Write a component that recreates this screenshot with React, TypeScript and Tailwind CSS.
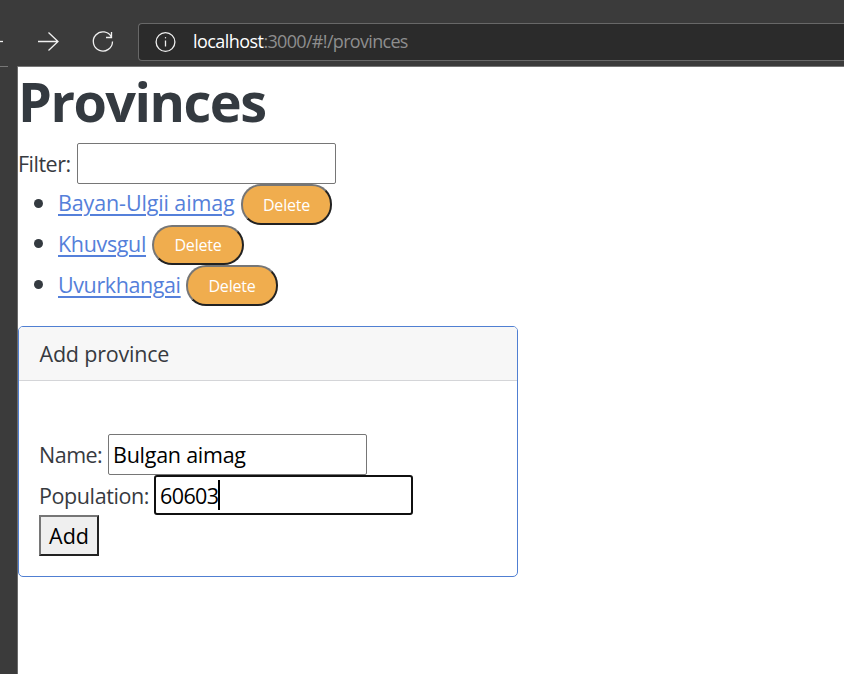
import React from "react";

const provinces = [
  { name: "Bayan-Ulgii aimag", link: "w-[177px] tracking-[-0.13px]", button: "ml-[6px] w-[91px]" },
  { name: "Khuvsgul", link: "w-[88px] tracking-[-0.35px]", button: "ml-[6px] w-[92px]" },
  { name: "Uvurkhangai", link: "w-[122px] tracking-[-0.4px]", button: "ml-[6px] w-[92px]" },
];

function Toolbar() {
  return (
    <header className="flex h-[66px] shrink-0 items-start pt-[23px]">
      <svg className="h-[38px] w-[138px] shrink-0" viewBox="0 23 138 38" fill="none" stroke="#f0f0f0" strokeWidth="1.3">
        <path d="M0 41.5H3" />
        <path d="M38 41.5H58M48.5 32.5L58 41.5L48.5 50.5" />
        <path d="M111.5 37.2A9.6 9.6 0 1 0 112.5 41.5M111.5 32V37.5H106" />
      </svg>
      <div className="flex h-[38px] flex-1 items-center rounded-l-[4px] border border-r-0 border-[#686868] bg-[#2b2b2b] pl-4">
        <svg className="size-[22px] shrink-0" viewBox="0 0 22 22" fill="none" stroke="#f0f0f0" strokeWidth="1.3">
          <circle cx="10.5" cy="11" r="9.4" />
          <path d="M10.5 9.5V15.5" />
          <circle cx="10.5" cy="6.8" r="0.7" fill="#f0f0f0" stroke="none" />
        </svg>
        <div className="mb-[2px] ml-[16px] whitespace-nowrap text-[18px] leading-6 tracking-[-0.68px] text-[#8e8e8e]">
          <span className="tracking-[-0.55px] text-white">localhost</span>:3000/#!/provinces
        </div>
      </div>
    </header>
  );
}

export default function App() {
  return (
    <div className="flex h-[674px] w-[844px] flex-col overflow-hidden bg-[#3b3b3b] font-['Open_Sans','Noto_Sans',sans-serif] text-[21.5px] leading-[30px] text-[#373a3f]">
      <Toolbar />
      <div className="flex flex-1">
        <div className="w-[18px] shrink-0 border-r border-[#6b6b6b]">
          <div className="h-px w-2 bg-[#777]" />
        </div>
        <main className="flex-1 border-t border-[#777] bg-white">
          <h1 className="h-[76px] text-[54px] font-bold leading-[69px] tracking-[-1.5px] text-[#343a40]">Provinces</h1>
          <div className="flex h-[41px] items-center whitespace-nowrap">
            <label className="w-[59px] tracking-[-0.5px]">Filter:</label>
            <input className="h-[41px] w-[259px] rounded-[2px] border border-[#767676] px-1 outline-none" />
          </div>
          <ul>
            {provinces.map((p) => (
              <li key={p.name} className="flex h-[40.67px] items-center whitespace-nowrap">
                <span className="mb-[2px] mr-[15px] ml-[16px] size-[9px] rounded-full bg-[#343a40]" />
                <a className={"pb-[2px] text-[#5580da] underline decoration-2 underline-offset-[3px] " + p.link}>{p.name}</a>
                <button
                  className={
                    "h-[40.5px] rounded-[20px] border-2 border-t-[#767676] border-r-[#222] border-b-[#222] border-l-[#767676] bg-[#f0ad4e] pt-px text-[16px] leading-6 tracking-[-0.2px] text-white " +
                    p.button
                  }
                >
                  Delete
                </button>
              </li>
            ))}
          </ul>
          <section className="mt-[20px] h-[251px] w-[500px] overflow-hidden rounded-[5px] border border-[#507fd2]">
            <h2 className="h-[54px] border-b border-[#d4d5d8] bg-[#f7f7f7] pt-[12px] pl-[20.5px] tracking-[-0.2px]">Add province</h2>
            <form className="pt-[53px] pl-5">
              <div className="flex h-[41px] items-center whitespace-nowrap">
                <label className="w-[69px] pt-[2px] tracking-[-0.5px]">Name:</label>
                <div className="h-[41px] w-[259px] rounded-[2px] border border-[#767676] pt-[5px] pl-[4px] tracking-[-0.25px] text-black">
                  Bulgan aimag
                </div>
              </div>
              <div className="flex h-[40px] items-center whitespace-nowrap">
                <label className="w-[115px] pt-[2px] tracking-[-0.4px]">Population:</label>
                <div className="flex h-[40px] w-[259px] items-center rounded-[3px] border-2 border-[#101010] bg-white pl-[4px] text-black">
                  <span className="w-[58px] pt-[2px] tracking-[-0.6px]">60603</span>
                  <span className="h-[30px] w-[2px] bg-black" />
                </div>
              </div>
              <button
                type="button"
                className="block h-[41px] w-[60px] border-2 border-t-[#767676] border-r-[#222] border-b-[#222] border-l-[#767676] bg-[#efefef] pt-[2px] text-black"
              >
                Add
              </button>
            </form>
          </section>
        </main>
      </div>
    </div>
  );
}
